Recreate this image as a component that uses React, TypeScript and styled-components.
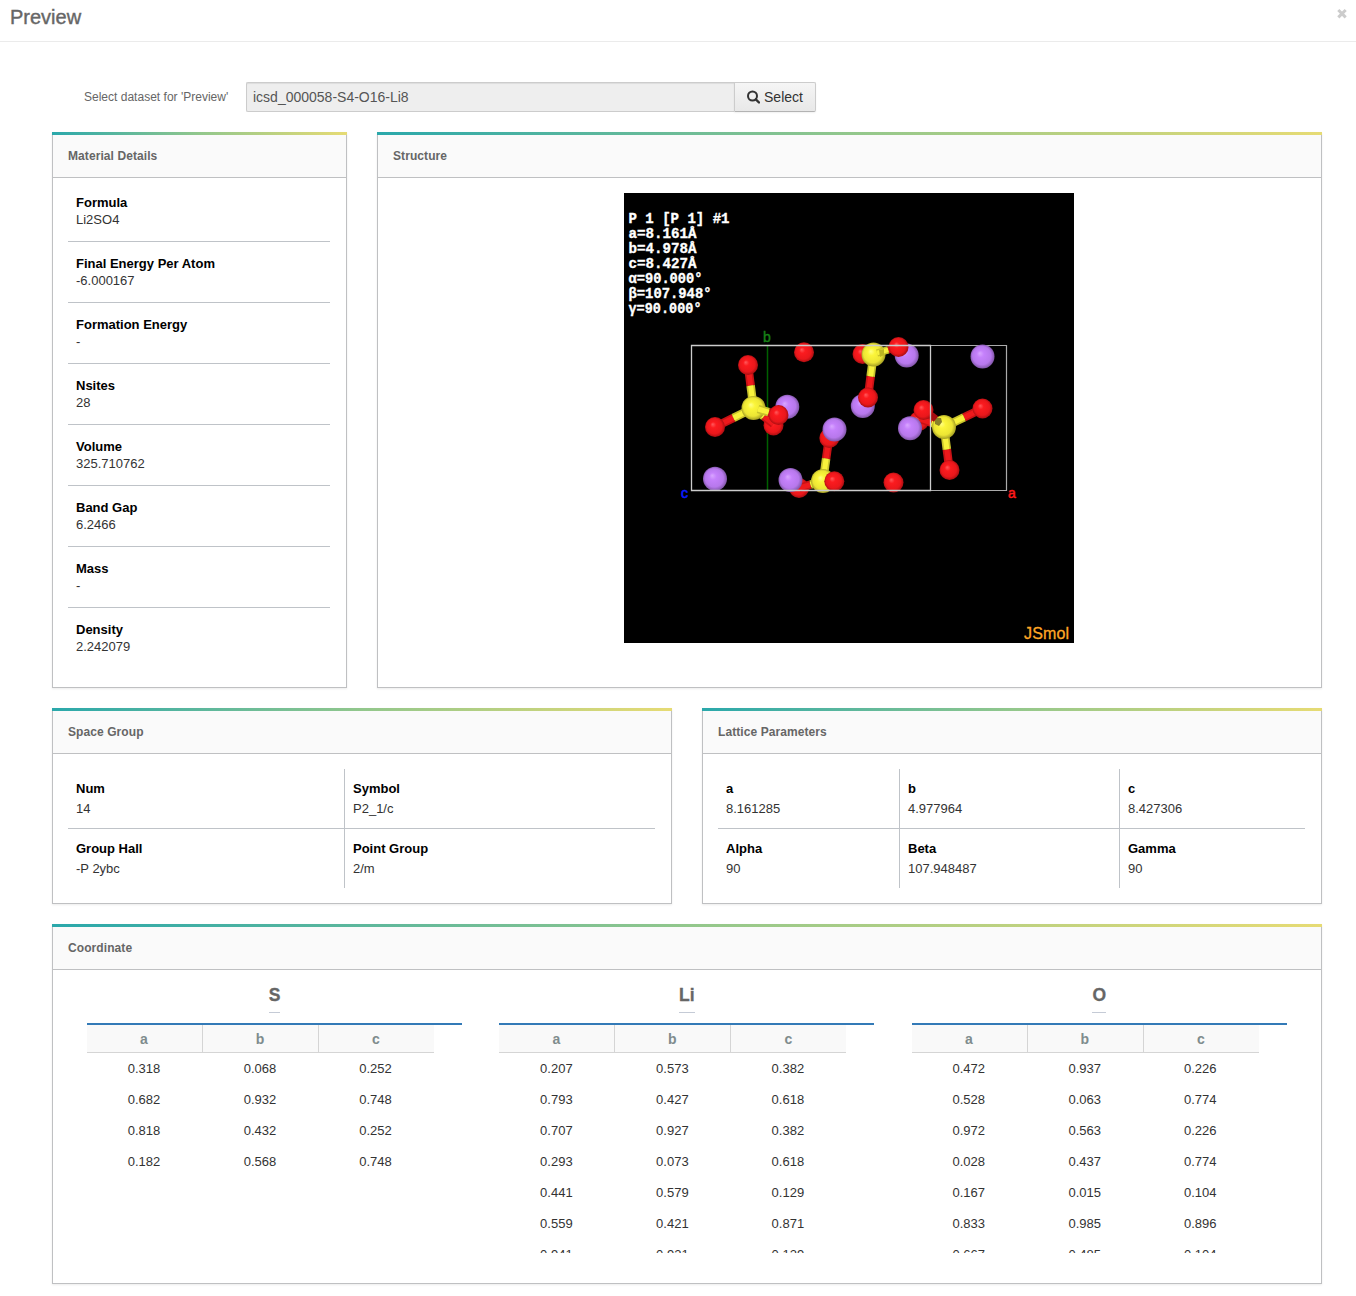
import React from "react";
import styled, { createGlobalStyle } from "styled-components";

const GlobalStyle = createGlobalStyle`
  *, *::before, *::after { box-sizing: border-box; }
  body {
    margin: 0;
    background: #fff;
    font-family: "Liberation Sans", Arial, Helvetica, sans-serif;
    font-size: 13px;
    color: #333;
  }
`;

const Page = styled.div`
  height: 1296px;
  overflow: hidden;
`;

const Header = styled.header`
  display: flex;
  justify-content: space-between;
  align-items: flex-start;
  height: 42px;
  padding: 5px 8px 0 10px;
  border-bottom: 1px solid #ebebeb;
`;

const Title = styled.h1`
  margin: 0;
  font-size: 20px;
  line-height: 24px;
  font-weight: 400;
  color: #666;
  -webkit-text-stroke: 0.4px #666;
`;

const CloseButton = styled.button`
  display: flex;
  margin-top: 3px;
  padding: 0;
  border: 0;
  background: none;
`;

const Main = styled.main`
  display: flex;
  flex-direction: column;
  gap: 20px;
  padding: 40px 34px 12px 52px;
`;

const Picker = styled.div`
  display: flex;
  align-items: center;
  height: 30px;
  padding-left: 32px;
`;

const PickerLabel = styled.label`
  width: 162px;
  font-size: 12px;
  letter-spacing: 0.01px;
  color: #666;
`;

const PickerInput = styled.div`
  width: 488px;
  height: 30px;
  padding: 0 6px;
  border: 1px solid #ccc;
  border-right: 0;
  border-radius: 2px 0 0 2px;
  background: #eee;
  box-shadow: inset 0 1px 1px rgba(0, 0, 0, 0.075);
  font-size: 14px;
  line-height: 28px;
  color: #555;
`;

const PickerButton = styled.button`
  display: flex;
  align-items: center;
  justify-content: center;
  gap: 4px;
  width: 82px;
  height: 30px;
  padding: 0;
  border: 1px solid #ccc;
  border-bottom-color: #b3b3b3;
  border-radius: 0 2px 2px 0;
  background: linear-gradient(#f5f5f5, #e8e8e8);
  box-shadow: 0 1px 2px rgba(0, 0, 0, 0.06);
  font: 14px "Liberation Sans", Arial, sans-serif;
  color: #333;
`;

const PanelRow = styled.div<{ $columns: string }>`
  display: grid;
  grid-template-columns: ${(p) => p.$columns};
  gap: 30px;
`;

const PanelBox = styled.section<{ $height: number }>`
  display: flex;
  flex-direction: column;
  height: ${(p) => p.$height}px;
  box-shadow: 0 1px 2px rgba(0, 0, 0, 0.08);
`;

const PanelStripe = styled.div`
  flex: none;
  height: 3px;
  background: linear-gradient(90deg, #2aa8ab, #92c78c 50%, #e6db74);
`;

const PanelHead = styled.h2`
  flex: none;
  height: 43px;
  margin: 0;
  padding: 0 15px;
  border: 1px solid #bfc0c2;
  border-top: 0;
  background: #fafafa;
  font-size: 12px;
  letter-spacing: 0.08px;
  line-height: 43px;
  font-weight: 700;
  color: #666;
`;

const PanelBody = styled.div<{ $pad: string }>`
  flex: 1;
  padding: ${(p) => p.$pad};
  border: 1px solid #bfc0c2;
  border-top: 0;
  background: #fff;
`;

const DetailList = styled.dl`
  margin: 0;
`;

const DetailItem = styled.div`
  height: 61px;
  padding: 13px 8px;
  border-bottom: 1px solid #bfc3c8;
  line-height: 17px;
  &:last-child { border-bottom: 0; }
`;

const Term = styled.dt`
  font-weight: 700;
  color: #000;
`;

const Value = styled.dd`
  margin: 0;
  color: #333;
`;

const CellGrid = styled.dl<{ $columns: string }>`
  display: grid;
  grid-template-columns: ${(p) => p.$columns};
  grid-template-rows: 60px 59px;
  margin: 0;
`;

const Cell = styled.div<{ $right: boolean; $bottom: boolean }>`
  padding: 10px 8px 0;
  border-right: ${(p) => (p.$right ? "1px solid #bfc3c8" : "0")};
  border-bottom: ${(p) => (p.$bottom ? "1px solid #bfc3c8" : "0")};
  line-height: 20px;
`;

const Viewer = styled.div`
  width: 450px;
  height: 450px;
  margin: 0 auto;
  background: #000;
`;

const Coordinates = styled.div`
  display: grid;
  grid-template-columns: repeat(3, 375px);
  column-gap: 37.4px;
`;

const Site = styled.div`
  display: flex;
  flex-direction: column;
`;

const SiteName = styled.h3`
  align-self: center;
  height: 28px;
  margin: 0 0 10px;
  border-bottom: 1px solid #c5cbd6;
  font-size: 17.5px;
  line-height: 20px;
  color: #666;
  -webkit-text-stroke: 0.3px #666;
`;

const SiteHead = styled.div`
  height: 30px;
  border-top: 2px solid #337ab7;
`;

const Triple = styled.div`
  display: grid;
  grid-template-columns: 116px 116px 115px;
  width: 347px;
  text-align: center;
`;

const HeadCell = styled.div`
  height: 28px;
  padding-right: 1px;
  border-right: 1px solid #d5d5d5;
  border-bottom: 1px solid #d5d5d5;
  background: #f9f9f9;
  font-size: 14px;
  font-weight: 700;
  line-height: 29px;
  color: #7f8c8d;
  &:last-child { border-right: 0; }
`;

const SiteRows = styled.div`
  height: 200px;
  overflow: hidden;
`;

const NumberCell = styled.div`
  height: 31px;
  padding-right: 2px;
  line-height: 31px;
`;

const details = [
  ["Formula", "Li2SO4"],
  ["Final Energy Per Atom", "-6.000167"],
  ["Formation Energy", "-"],
  ["Nsites", "28"],
  ["Volume", "325.710762"],
  ["Band Gap", "6.2466"],
  ["Mass", "-"],
  ["Density", "2.242079"],
];

const spaceGroup = [
  ["Num", "14"],
  ["Symbol", "P2_1/c"],
  ["Group Hall", "-P 2ybc"],
  ["Point Group", "2/m"],
];

const lattice = [
  ["a", "8.161285"],
  ["b", "4.977964"],
  ["c", "8.427306"],
  ["Alpha", "90"],
  ["Beta", "107.948487"],
  ["Gamma", "90"],
];

const sites = [
  {
    name: "S",
    rows: ["0.318 0.068 0.252", "0.682 0.932 0.748", "0.818 0.432 0.252", "0.182 0.568 0.748"],
  },
  {
    name: "Li",
    rows: [
      "0.207 0.573 0.382", "0.793 0.427 0.618", "0.707 0.927 0.382", "0.293 0.073 0.618",
      "0.441 0.579 0.129", "0.559 0.421 0.871", "0.941 0.921 0.129",
    ],
  },
  {
    name: "O",
    rows: [
      "0.472 0.937 0.226", "0.528 0.063 0.774", "0.972 0.563 0.226", "0.028 0.437 0.774",
      "0.167 0.015 0.104", "0.833 0.985 0.896", "0.667 0.485 0.104",
    ],
  },
];

function Panel(props: { title: string; height: number; pad: string; children: React.ReactNode }) {
  return (
    <PanelBox $height={props.height}>
      <PanelStripe />
      <PanelHead>{props.title}</PanelHead>
      <PanelBody $pad={props.pad}>{props.children}</PanelBody>
    </PanelBox>
  );
}

function PropertyGrid(props: { items: string[][]; perRow: number; columns: string }) {
  return (
    <CellGrid $columns={props.columns}>
      {props.items.map(([term, value], i) => (
        <Cell key={term} $right={(i + 1) % props.perRow !== 0} $bottom={i < props.perRow}>
          <Term>{term}</Term>
          <Value>{value}</Value>
        </Cell>
      ))}
    </CellGrid>
  );
}

const RADII = { O: 10, S: 12, Li: 12 };

function Atom({ el, x, y }: { el: "O" | "S" | "Li"; x: number; y: number }) {
  return <circle cx={x} cy={y} r={RADII[el]} fill={`url(#atom-${el})`} />;
}

// A stick from a sulfur to an oxygen, coloured half by each end.
function Bond({ s, o, w = 8.5 }: { s: [number, number]; o: [number, number]; w?: number }) {
  const mx = s[0] + (o[0] - s[0]) * 0.52;
  const my = s[1] + (o[1] - s[1]) * 0.52;
  return (
    <g fill="none">
      <path d={`M${mx} ${my}L${o[0]} ${o[1]}`} stroke="#c81215" strokeWidth={w} />
      <path d={`M${mx} ${my}L${o[0]} ${o[1]}`} stroke="#ee191c" strokeWidth={w * 0.6} />
      <path d={`M${s[0]} ${s[1]}L${mx} ${my}`} stroke="#c9c32c" strokeWidth={w} />
      <path d={`M${s[0]} ${s[1]}L${mx} ${my}`} stroke="#f8f23c" strokeWidth={w * 0.6} />
    </g>
  );
}

const gradients: [string, string, string, string, string][] = [
  ["O", "#ff5a5c", "#fb1b1f", "#ea171b", "#9c0c0f"],
  ["S", "#ffff88", "#fbf53a", "#ece534", "#969020"],
  ["Li", "#d9a6ff", "#c581fb", "#b778ec", "#764f9a"],
];

const readout: [string, number][] = [
  ["P 1 [P 1] #1", 101],
  ["a=8.161Å", 68],
  ["b=4.978Å", 68],
  ["c=8.427Å", 68],
  ["α=90.000°", 74],
  ["β=107.948°", 83],
  ["γ=90.000°", 73],
];

function Structure() {
  return (
    <svg width="450" height="450" viewBox="624 193 450 450" display="block">
      <defs>
        {gradients.map(([id, hi, base, mid, edge]) => (
          <radialGradient key={id} id={`atom-${id}`} cx="0.5" cy="0.5" r="0.53" fx="0.38" fy="0.36">
            <stop offset="0" stopColor={hi} />
            <stop offset="0.28" stopColor={base} />
            <stop offset="0.72" stopColor={mid} />
            <stop offset="1" stopColor={edge} />
          </radialGradient>
        ))}
      </defs>
      <g
        fill="#fff"
        stroke="#fff"
        strokeWidth=".35"
        fontFamily='"Liberation Mono", "Courier New", monospace'
        fontSize="14"
        fontWeight="700"
      >
        {readout.map(([line, width], i) => (
          <text key={line} x="628.5" y={223 + i * 15} textLength={width} lengthAdjust="spacingAndGlyphs">
            {line}
          </text>
        ))}
      </g>

      <path d="M767.5 345.500V490" stroke="#006000" strokeWidth="1.500" />
      <path d="M930.500 345.500H1006.500V490.500H930.500" fill="none" stroke="#aaa" strokeWidth="1.200" />

      <Atom el="O" x={804} y={352.300} />
      <Atom el="O" x={862.500} y={354} />
      <Atom el="Li" x={906.700} y={355.500} />
      <Atom el="Li" x={982.500} y={356.500} />
      <Atom el="Li" x={862.800} y={406} />
      <Bond s={[873.500, 354]} o={[868, 397]} />
      <Atom el="S" x={873.500} y={354.500} />
      <Bond s={[877, 353]} o={[898.500, 347]} w={7.500} />
      <path d="M879 350L884 349V355L880 357Z" fill="#bdb523" />
      <Atom el="O" x={898.500} y={347} />
      <Atom el="O" x={868} y={397.500} />

      <Atom el="Li" x={787.300} y={406.800} />
      <Atom el="O" x={773.500} y={425.500} />
      <Bond s={[753.500, 408]} o={[773.500, 424]} />
      <Bond s={[753.500, 408]} o={[748, 365]} />
      <Bond s={[753.500, 408]} o={[715, 427]} />
      <Atom el="S" x={753.500} y={408} />
      <Bond s={[758, 409]} o={[778.500, 415]} />
      <Atom el="O" x={748} y={365} />
      <Atom el="O" x={715} y={427} />
      <Atom el="O" x={778.500} y={415} />

      <Atom el="O" x={799} y={488} />
      <Bond s={[823, 481]} o={[799, 488]} />
      <Bond s={[823, 481]} o={[829, 438]} />
      <Atom el="O" x={829.300} y={438} />
      <Atom el="S" x={823} y={481} />
      <Atom el="Li" x={834.500} y={429.500} />
      <Atom el="Li" x={790.500} y={480} />
      <Atom el="O" x={834.300} y={481.300} />
      <Atom el="Li" x={715} y={478.800} />
      <Atom el="O" x={893.500} y={482.500} />

      <Atom el="O" x={919} y={421} />
      <Bond s={[944, 427]} o={[920, 419]} />
      <Bond s={[944, 427]} o={[982.500, 408.500]} />
      <Bond s={[944, 427]} o={[949.500, 470]} />
      <Atom el="S" x={944} y={427} />
      <path d="M935 418L941 418L942 422L939 426L935 424Z" fill="#88802a" />
      <path d="M923 409L936 419" stroke="#a50e11" strokeWidth="7" />
      <Atom el="O" x={923.500} y={410} />
      <Atom el="Li" x={910} y={428.300} />
      <Atom el="O" x={982.500} y={408.500} />
      <Atom el="O" x={949.500} y={470} />

      <path d="M691.500 345.500H930.500V490.500H691.500Z" fill="none" stroke="#ccc" strokeWidth="1.300" />

      <g fontFamily='"Liberation Sans", Arial, sans-serif' fontSize="14">
        <text x="763" y="342" fill="#178217" stroke="#178217" strokeWidth=".4">b</text>
        <text x="681" y="498" fill="#0a1cff" stroke="#0a1cff" strokeWidth=".6">c</text>
        <text x="1008" y="498" fill="#ff1a1a" stroke="#ff1a1a" strokeWidth=".5">a</text>
        <text x="1024" y="639" fontSize="16" fill="#ffa726" stroke="#ffa726" strokeWidth=".3" textLength="45">JSmol</text>
      </g>
    </svg>
  );
}

export default function App() {
  return (
    <Page>
      <GlobalStyle />
      <Header>
        <Title>Preview</Title>
        <CloseButton aria-label="Close">
          <svg width="12" height="12" viewBox="0 0 12 12">
            <path d="M2.300 2L9.700 9.400M9.700 2L2.300 9.400" stroke="#ccc" strokeWidth="3" />
          </svg>
        </CloseButton>
      </Header>
      <Main>
        <Picker>
          <PickerLabel>Select dataset for 'Preview'</PickerLabel>
          <PickerInput>icsd_000058-S4-O16-Li8</PickerInput>
          <PickerButton>
            <svg width="13" height="14" viewBox="0 0 13 14" fill="none" stroke="#333" strokeWidth="2">
              <circle cx="5.500" cy="6" r="4.500" />
              <path d="M8.800 9.300L12 12.500" strokeWidth="2.400" strokeLinecap="round" />
            </svg>
            Select
          </PickerButton>
        </Picker>

        <PanelRow $columns="295px 945px">
          <Panel title="Material Details" height={556} pad="3px 16px 0 15px">
            <DetailList>
              {details.map(([term, value]) => (
                <DetailItem key={term}>
                  <Term>{term}</Term>
                  <Value>{value}</Value>
                </DetailItem>
              ))}
            </DetailList>
          </Panel>
          <Panel title="Structure" height={556} pad="15px 16px 0 15px">
            <Viewer>
              <Structure />
            </Viewer>
          </Panel>
        </PanelRow>

        <PanelRow $columns="620px 620px">
          <Panel title="Space Group" height={196} pad="15px 16px 0 15px">
            <PropertyGrid items={spaceGroup} perRow={2} columns="277px 1fr" />
          </Panel>
          <Panel title="Lattice Parameters" height={196} pad="15px 16px 0 15px">
            <PropertyGrid items={lattice} perRow={3} columns="182px 220px 1fr" />
          </Panel>
        </PanelRow>

        <Panel title="Coordinate" height={360} pad="15px 34px 0">
          <Coordinates>
            {sites.map((site) => (
              <Site key={site.name}>
                <SiteName>{site.name}</SiteName>
                <SiteHead>
                  <Triple>
                    <HeadCell>a</HeadCell>
                    <HeadCell>b</HeadCell>
                    <HeadCell>c</HeadCell>
                  </Triple>
                </SiteHead>
                <SiteRows>
                  {site.rows.map((row) => (
                    <Triple key={row}>
                      {row.split(" ").map((n, i) => (
                        <NumberCell key={i}>{n}</NumberCell>
                      ))}
                    </Triple>
                  ))}
                </SiteRows>
              </Site>
            ))}
          </Coordinates>
        </Panel>
      </Main>
    </Page>
  );
}
